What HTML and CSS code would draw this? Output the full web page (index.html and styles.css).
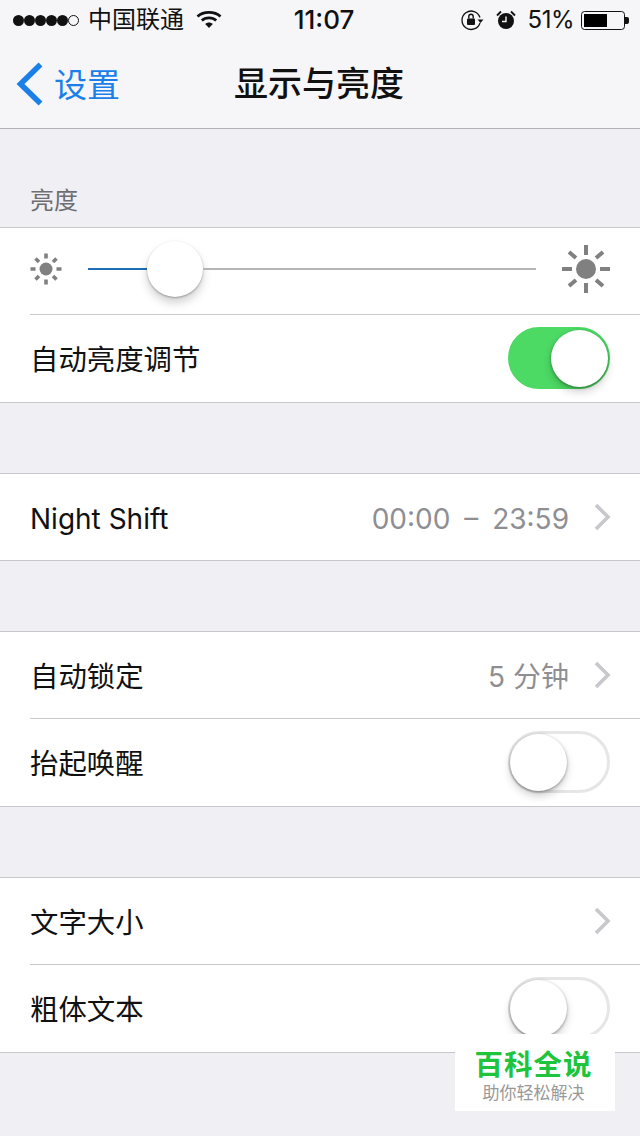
FILE: index.html
```html
<!DOCTYPE html>
<html lang="zh-CN">
<head>
<meta charset="utf-8">
<title>显示与亮度</title>
<link rel="stylesheet" href="styles.css">
</head>
<body>
<div class="phone">
  <header class="top">
    <div class="status">
      <div class="status-left">
        <span class="signal"><i></i><i></i><i></i><i></i><i></i><i class="empty"></i></span>
        <span class="carrier">中国联通</span>
        <svg class="wifi" width="26" height="20" viewBox="0 0 26 20"><path d="M1.5 6.5C7.5 1 18.500 1 24.500 6.500" fill="none" stroke="#111" stroke-width="2.800"/><path d="M5.800 10.500C9.500 7 16.500 7 20.200 10.500" fill="none" stroke="#111" stroke-width="2.800"/><path d="M9.200 14C11.500 12 14.500 12 16.800 14L13 18Z" fill="#111"/></svg>
      </div>
      <div class="clock">11:07</div>
      <div class="status-right">
        <svg class="lock" width="24" height="22" viewBox="0 0 24 22"><path d="M20 8.500A9.200 9.200 0 1 0 20 14" fill="none" stroke="#111" stroke-width="1.300"/><path d="M17.500 10.500h6l-3 3.500z" fill="#111"/><rect x="7" y="9.500" width="8" height="6.500" rx="1" fill="#111"/><path d="M8.800 9.500V7.500a2.200 2.200 0 0 1 4.400 0v2" fill="none" stroke="#111" stroke-width="1.400"/></svg>
        <svg class="alarm" width="22" height="22" viewBox="0 0 22 22"><circle cx="11" cy="12" r="8" fill="#111"/><path d="M11 7.500V12.500H7" fill="none" stroke="#f5f5f8" stroke-width="1.400"/><path d="M2 6.500L6 2.500M20 6.500L16 2.500" stroke="#111" stroke-width="1.800"/></svg>
        <span class="percent">51%</span>
        <span class="battery"><span class="battery-fill"></span></span><span class="battery-tip"></span>
      </div>
    </div>
    <nav class="nav">
      <div class="back">
        <svg width="30" height="44" viewBox="0 0 30 44"><path d="M25.500 2.500L5.500 22L25.500 41.500" fill="none" stroke="#1a7fe8" stroke-width="5.500"/></svg>
        <span class="back-text">设置</span>
      </div>
      <h1>显示与亮度</h1>
    </nav>
  </header>

  <div class="section-label">亮度</div>
  <section class="group">
    <div class="row slider-row">
      <svg class="sun" width="36" height="36" viewBox="0 0 36 36"><circle cx="18" cy="18" r="6.500" fill="#808080"/><g stroke="#808080" stroke-width="3.600"><path d="M18 2.500v5M18 28.500v5M2.500 18h5M28.500 18h5M7.500 7.500l3.500 3.500M25 25l3.500 3.500M28.500 7.500L25 11M11 25l-3.500 3.500"/></g></svg>
      <div class="track">
        <span class="track-on"></span>
        <span class="thumb"></span>
        <span class="track-off"></span>
      </div>
      <svg class="sun-big" width="50" height="50" viewBox="0 0 50 50"><circle cx="25" cy="25" r="10" fill="#808080"/><g stroke="#808080" stroke-width="4"><path d="M25 1v10M25 39v10M1 25h10M39 25h10M8 8l7 6M35 36l7 6M42 8l-7 6M15 36l-7 6"/></g></svg>
    </div>
    <div class="row">
      <span class="label">自动亮度调节</span>
      <span class="switch on"><span class="knob"></span></span>
    </div>
  </section>

  <section class="group gap">
    <div class="row">
      <span class="label latin">Night Shift</span>
      <span class="value time">00:00 – 23:59</span>
      <svg class="chev" width="18" height="28" viewBox="0 0 18 28"><path d="M3 2L15 14L3 26" fill="none" stroke="#c7c7cc" stroke-width="3.600"/></svg>
    </div>
  </section>

  <section class="group gap">
    <div class="row">
      <span class="label">自动锁定</span>
      <span class="value">5 分钟</span>
      <svg class="chev" width="18" height="28" viewBox="0 0 18 28"><path d="M3 2L15 14L3 26" fill="none" stroke="#c7c7cc" stroke-width="3.600"/></svg>
    </div>
    <div class="row">
      <span class="label">抬起唤醒</span>
      <span class="switch"><span class="knob"></span></span>
    </div>
  </section>

  <section class="group gap">
    <div class="row">
      <span class="label">文字大小</span>
      <svg class="chev" width="18" height="28" viewBox="0 0 18 28"><path d="M3 2L15 14L3 26" fill="none" stroke="#c7c7cc" stroke-width="3.600"/></svg>
    </div>
    <div class="row">
      <span class="label">粗体文本</span>
      <span class="switch"><span class="knob"></span></span>
    </div>
  </section>

  <aside class="mark">
    <div class="mark-title">百科全说</div>
    <div class="mark-sub">助你轻松解决</div>
  </aside>
</div>
</body>
</html>
```
FILE: styles.css
```css
* { box-sizing: border-box; }
html, body { margin: 0; padding: 0; }
body {
  font-family: Inter, "Noto Sans CJK SC", "Liberation Sans", sans-serif;
  background: #efeff4;
  color: #111;
}
.phone { position: relative; width: 640px; height: 1136px; overflow: hidden; background: #efeff4; }

.top { height: 129px; background: #f6f6f8; border-bottom: 1px solid #b2b2b6; }
.status { display: flex; align-items: center; justify-content: space-between; height: 40px; padding: 0 11px 0 13px; position: relative; }
.status-left { display: flex; align-items: center; }
.signal { display: flex; margin-right: 9px; }
.signal i { width: 11px; height: 11px; border-radius: 50%; background: #111; }
.signal i.empty { background: transparent; border: 1.500px solid #111; }
.carrier { font-size: 24px; line-height: 40px; color: #111; }
.wifi { margin-left: 12px; margin-top: 0; }
.clock { position: absolute; left: 8px; right: 0; text-align: center; font-size: 26px; font-weight: 500; line-height: 40px; }
.status-right { display: flex; align-items: center; position: relative; }
.lock { margin-right: 11px; }
.alarm { margin-right: 11px; }
.percent { font-size: 24px; line-height: 40px; margin-right: 7px; letter-spacing: -0.500px; }
.battery { display: block; width: 44px; height: 19px; border: 1.500px solid #111; border-radius: 3.500px; padding: 2px; }
.battery-fill { display: block; width: 23px; height: 100%; background: #000; }
.battery-tip { display: block; width: 4px; height: 7px; background: #111; border-radius: 0 2px 2px 0; }

.nav { position: relative; display: flex; align-items: center; justify-content: center; height: 88px; padding: 0 2px 0 0; }
.nav h1 { margin: 0; font-size: 34px; font-weight: 500; line-height: 88px; color: #111; }
.back { position: absolute; left: 15px; top: 0; height: 88px; display: flex; align-items: center; gap: 9px; color: #1a7fe8; font-size: 33px; }
.back-text { padding-bottom: 3px; }

.section-label { height: 98px; padding: 55px 0 0 30px; font-size: 24px; line-height: 34px; color: #6d6d72; }

.group { background: #fff; border-top: 1px solid #c8c7cc; border-bottom: 1px solid #c8c7cc; }
.gap { margin-top: 70px; }
.row { display: flex; align-items: center; height: 86px; padding: 0 30px; position: relative; }
.row + .row { height: 88px; }
.row + .row::before { content: ""; position: absolute; left: 30px; right: 0; top: 0; height: 1px; background: #c8c7cc; }

.label { flex: 1; font-size: 28.400px; line-height: 40px; padding-top: 4px; color: #111; }
.label.latin { font-size: 28px; }
.value { font-size: 28px; color: #8e8e93; margin-right: 24px; }
.value.time { padding-top: 4px; word-spacing: 6px; }
.chev { display: block; margin-right: -1px; }

.slider-row { padding: 0 29px 4px 28px; }
.track { flex: 1; display: flex; align-items: center; margin: 0 25px 0 24px; }
.track-on { width: 59px; height: 2px; background: #1c6fb8; }
.track-off { flex: 1; height: 2px; background: #b5b5b5; }
.thumb { width: 56px; height: 56px; border-radius: 50%; background: #fff; box-shadow: 0 6px 10px rgba(0,0,0,.18), 0 1px 2px rgba(0,0,0,.3); }

.switch { display: block; width: 102px; height: 62px; border-radius: 31px; border: 3px solid #e6e6e6; background: #fff; position: relative; }
.knob { display: block; position: absolute; left: -1px; top: 0; width: 57px; height: 57px; border-radius: 50%; background: #fff; box-shadow: 0 5px 9px rgba(0,0,0,.18), 0 1px 3px rgba(0,0,0,.35); }
.switch.on { background: #4cd964; border-color: #4cd964; }
.switch.on .knob { left: auto; right: -1px; }

.mark { position: absolute; left: 455px; top: 1034px; width: 160px; height: 77px; background: #fff; text-align: center; }
.mark-title { font-size: 28.500px; font-weight: 700; line-height: 32px; padding-top: 15px; color: #1dc43c; letter-spacing: 1px; padding-right: 3px; }
.mark-sub { font-size: 17px; line-height: 24px; color: #999; padding-right: 3px; }
```
